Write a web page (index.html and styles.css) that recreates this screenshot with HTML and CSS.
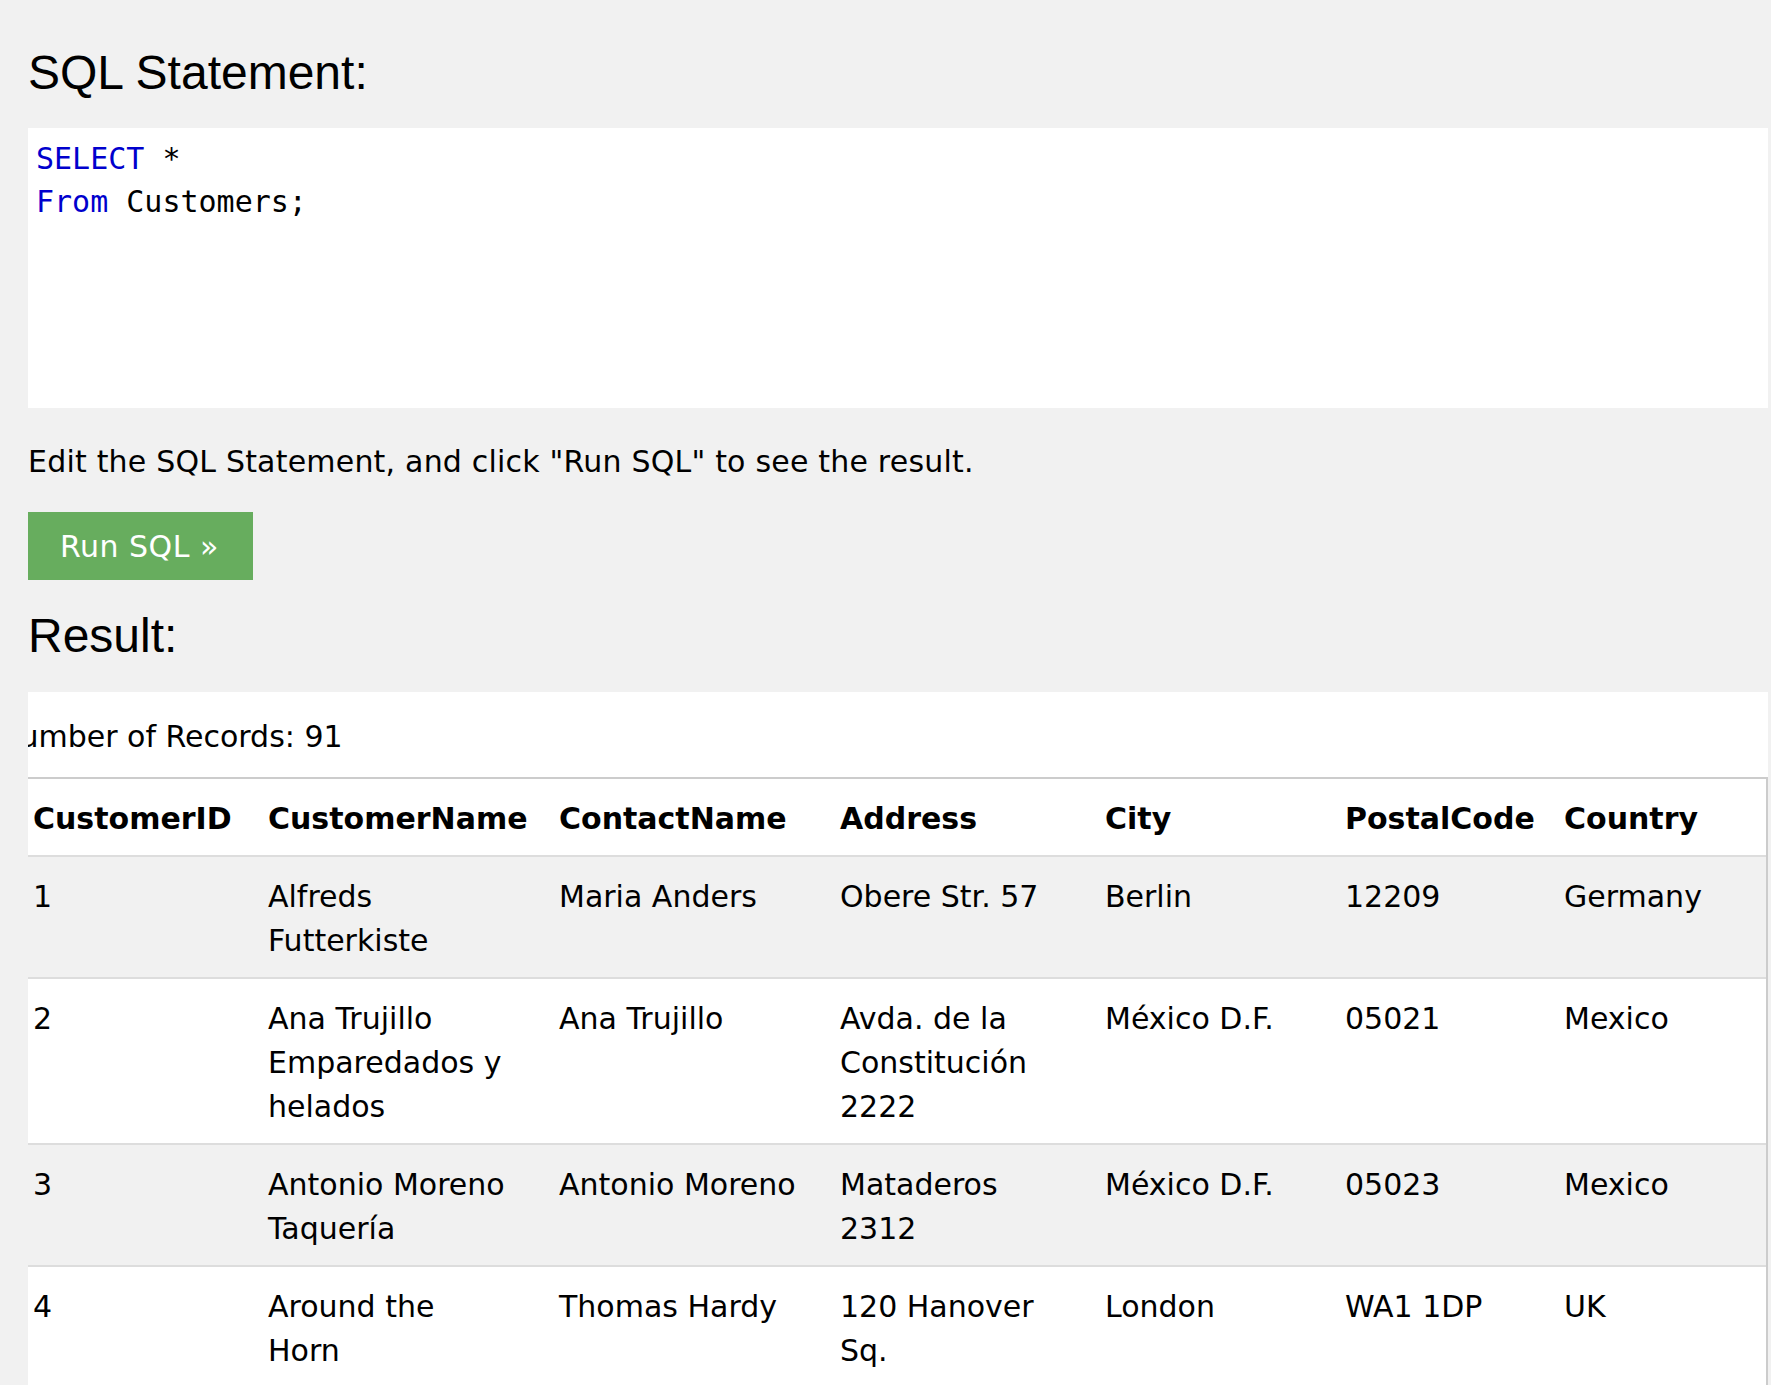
FILE: index.html
```html
<!DOCTYPE html>
<html lang="en">
<head>
<meta charset="utf-8">
<title>SQL Tryit</title>
<link rel="stylesheet" href="styles.css">
</head>
<body>
<div class="page">
  <h2 class="title">SQL Statement:</h2>
  <div class="code">
    <div class="code-line"><span class="kw">SELECT</span> *</div>
    <div class="code-line"><span class="kw">From</span> Customers;</div>
  </div>
  <p class="hint">Edit the SQL Statement, and click "Run SQL" to see the result.</p>
  <button class="run" type="button">Run SQL »</button>
  <h2 class="title result-title">Result:</h2>
  <div class="result">
    <div class="records">Number of Records: 91</div>
    <table class="data">
      <colgroup>
        <col class="w1"><col class="w2"><col class="w3"><col class="w4"><col class="w5"><col class="w6"><col class="w7">
      </colgroup>
      <thead>
        <tr><th>CustomerID</th><th class="c2">CustomerName</th><th>ContactName</th><th>Address</th><th>City</th><th>PostalCode</th><th>Country</th></tr>
      </thead>
      <tbody>
        <tr class="odd"><td>1</td><td class="c2">Alfreds Futterkiste</td><td>Maria Anders</td><td>Obere Str. 57</td><td>Berlin</td><td>12209</td><td>Germany</td></tr>
        <tr><td>2</td><td class="c2">Ana Trujillo Emparedados y helados</td><td>Ana Trujillo</td><td>Avda. de la Constitución 2222</td><td>México D.F.</td><td>05021</td><td>Mexico</td></tr>
        <tr class="odd"><td>3</td><td class="c2">Antonio Moreno Taquería</td><td>Antonio Moreno</td><td>Mataderos 2312</td><td>México D.F.</td><td>05023</td><td>Mexico</td></tr>
        <tr><td>4</td><td class="c2">Around the Horn</td><td>Thomas Hardy</td><td>120 Hanover Sq.</td><td>London</td><td>WA1 1DP</td><td>UK</td></tr>
        <tr class="odd"><td>5</td><td class="c2">Berglunds snabbköp</td><td>Christina Berglund</td><td>Berguvsvägen 8</td><td>Luleå</td><td>S-958 22</td><td>Sweden</td></tr>
      </tbody>
    </table>
  </div>
</div>
</body>
</html>
```

FILE: styles.css
```css
html, body {
  margin: 0;
  padding: 0;
  background: #f1f1f1;
}

body {
  font-family: "DejaVu Sans", Verdana, sans-serif;
  font-size: 30px;
  line-height: 44px;
  color: #000;
}

.page {
  padding: 0 3px 0 28px;
}

.title {
  font-family: "Liberation Sans", Arial, sans-serif;
  font-weight: normal;
  font-size: 48px;
  line-height: 55px;
  margin: 45px 0 28px;
}

.code {
  background: #fff;
  height: 280px;
  box-sizing: border-box;
  padding: 9px 8px;
  font-family: "DejaVu Sans Mono", monospace;
  font-size: 30px;
  line-height: 43px;
  color: #000;
}

.kw {
  color: #0000cd;
}

.hint {
  margin: 32px 0 28px;
  letter-spacing: 0.2px;
}

.run {
  display: block;
  border: none;
  margin: 0;
  background: #67ad5e;
  color: #fff;
  font-family: "DejaVu Sans", Verdana, sans-serif;
  font-size: 30px;
  line-height: 36px;
  letter-spacing: 0.5px;
  padding: 17px 34px 15px 32px;
  cursor: pointer;
}

.result-title {
  margin: 28px 0 29px;
}

.result {
  background: #fff;
  overflow: hidden;
  padding-top: 23px;
}

.records {
  margin-left: -31px;
  margin-bottom: 18px;
  white-space: nowrap;
}

.data {
  margin-left: -13px;
  width: 1753px;
  table-layout: fixed;
  border-collapse: separate;
  border-spacing: 0;
  border: 2px solid #ccc;
}

.w1 { width: 235px; }
.w2 { width: 291px; }
.w3 { width: 281px; }
.w4 { width: 265px; }
.w5 { width: 240px; }
.w6 { width: 219px; }
.w7 { width: 218px; }

.data th,
.data td {
  text-align: left;
  vertical-align: top;
  padding: 18px 16px 14px;
  border-bottom: 2px solid #ddd;
}

.data th {
  font-weight: bold;
  white-space: nowrap;
  background: #fff;
}

.data .c2 {
  padding-right: 30px;
}

.data tr.odd td {
  background: #f1f1f1;
}
```
